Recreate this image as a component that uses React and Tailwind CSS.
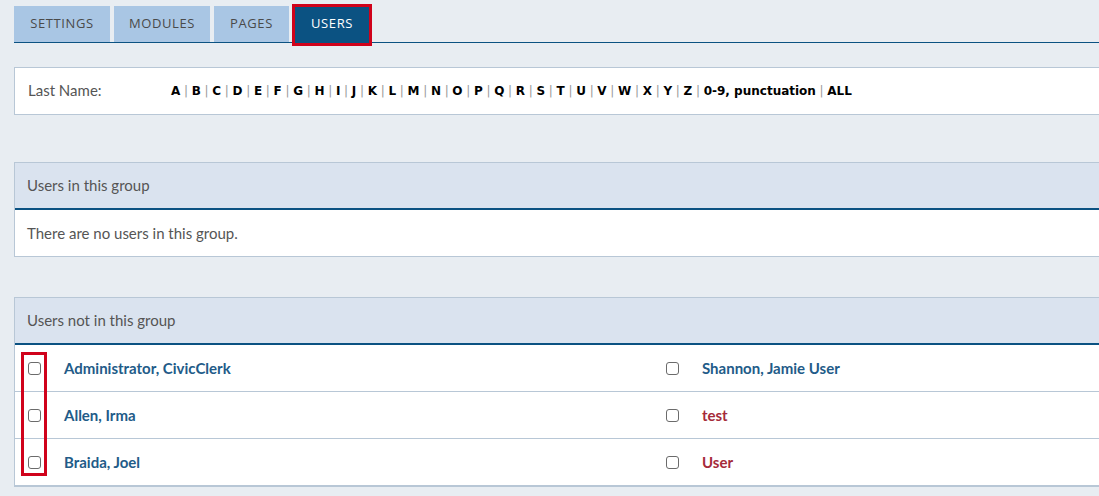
import React from "react";

const letters = ["A","B","C","D","E","F","G","H","I","J","K","L","M","N","O","P","Q","R","S","T","U","V","W","X","Y","Z","0-9, punctuation","ALL"];

function Box() {
  return <span className="block w-[13px] h-[13px] rounded-[3px] border border-[#6b6b6b] bg-white" />;
}

function Cell({ name, red }) {
  return (
    <div className="flex items-center h-[46px] pl-[13px]">
      <Box />
      <span className={`ml-[23px] text-[15px] font-bold ${red ? "text-[#a52a3a]" : "text-[#225b88]"}`}>{name}</span>
    </div>
  );
}

export default function App() {
  const rows = [
    ["Administrator, CivicClerk", false, "Shannon, Jamie User", false],
    ["Allen, Irma", false, "test", true],
    ["Braida, Joel", false, "User", true],
  ];
  const tabs = [
    ["SETTINGS", "w-[96px]"],
    ["MODULES", "w-[96px]"],
    ["PAGES", "w-[75px]"],
  ];
  return (
    <div className="w-[1099px] h-[496px] overflow-hidden bg-[#e8edf2] pl-[14px] pt-[6px]" style={{ fontFamily: "Lato, 'Open Sans', sans-serif" }}>
      {/* tabs */}
      <div className="flex gap-[4px] border-b border-[#0b5282] h-[37px]">
        {tabs.map(([t, w]) => (
          <div key={t} className={`${w} h-[36px] bg-[#a9c6e4] text-[#4a4a4a] text-[13px] tracking-[0.6px] flex items-center justify-center`} style={{ fontFamily: "'Open Sans', sans-serif" }}>{t}</div>
        ))}
        <div className="relative w-[78px] h-[36px] bg-[#0b5282] text-white text-[13px] tracking-[0.6px] flex items-center justify-center" style={{ fontFamily: "'Open Sans', sans-serif" }}>
          USERS
          <span className="absolute -left-[1px] -top-[2px] -right-[1px] -bottom-[4px] border-[3px] border-[#d0021b]" />
        </div>
      </div>

      {/* filter */}
      <div className="mt-[24px] w-[1200px] h-[48px] bg-white border border-[#b8c7d6] flex items-center pl-[13px]">
        <span className="text-[15px] text-[#555] w-[143px] -mt-[2px]">Last Name:</span>
        <span className="text-[12px] font-bold text-black -mt-[1px]" style={{ fontFamily: "'DejaVu Sans', Verdana, sans-serif" }}>
          {letters.map((l, i) => (
            <React.Fragment key={l}>
              {i > 0 && <span className="font-normal text-[#9a9a9a] mx-[3.7px]">|</span>}
              <span>{l}</span>
            </React.Fragment>
          ))}
        </span>
      </div>

      {/* panel 1 */}
      <div className="mt-[47px] w-[1200px] border border-[#b8c7d6] bg-white">
        <div className="h-[47px] bg-[#dae3ef] border-b-2 border-[#0b5282] flex items-center pl-[12px] text-[15px] text-[#555]">Users in this group</div>
        <div className="h-[46px] flex items-center pl-[12px] text-[15px] text-[#555]">There are no users in this group.</div>
      </div>

      {/* panel 2 */}
      <div className="relative mt-[40px] w-[1200px] border border-[#b8c7d6] bg-white">
        <div className="h-[47px] bg-[#dae3ef] border-b-2 border-[#0b5282] flex items-center pl-[12px] text-[15px] text-[#555]">Users not in this group</div>
        {rows.map((r, i) => (
          <div key={i} className="grid grid-cols-[638px_1fr] border-b border-[#b8c7d6]">
            <Cell name={r[0]} red={r[1]} />
            <Cell name={r[2]} red={r[3]} />
          </div>
        ))}
        <span className="absolute left-[6px] top-[54px] w-[26px] h-[124px] border-[3px] border-[#d0021b]" />
      </div>
    </div>
  );
}
